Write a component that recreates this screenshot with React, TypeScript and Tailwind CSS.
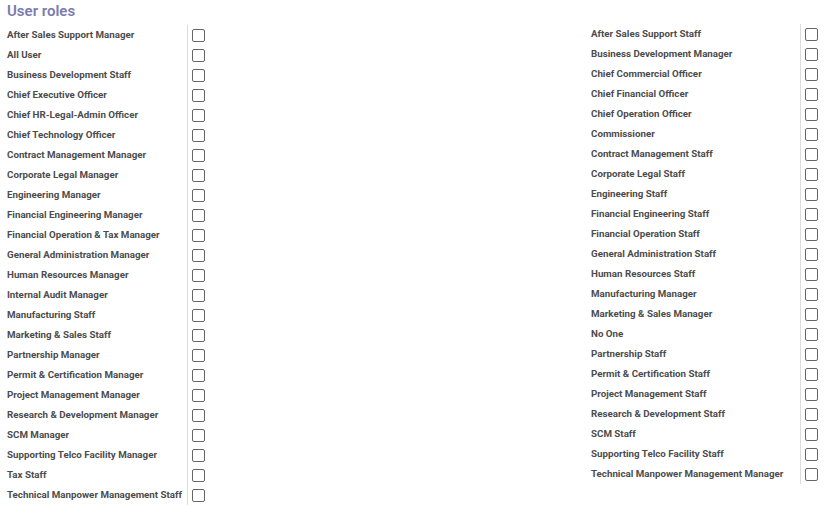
const LEFT = [
  "After Sales Support Manager",
  "All User",
  "Business Development Staff",
  "Chief Executive Officer",
  "Chief HR-Legal-Admin Officer",
  "Chief Technology Officer",
  "Contract Management Manager",
  "Corporate Legal Manager",
  "Engineering Manager",
  "Financial Engineering Manager",
  "Financial Operation & Tax Manager",
  "General Administration Manager",
  "Human Resources Manager",
  "Internal Audit Manager",
  "Manufacturing Staff",
  "Marketing & Sales Staff",
  "Partnership Manager",
  "Permit & Certification Manager",
  "Project Management Manager",
  "Research & Development Manager",
  "SCM Manager",
  "Supporting Telco Facility Manager",
  "Tax Staff",
  "Technical Manpower Management Staff",
];

const RIGHT = [
  "After Sales Support Staff",
  "Business Development Manager",
  "Chief Commercial Officer",
  "Chief Financial Officer",
  "Chief Operation Officer",
  "Commissioner",
  "Contract Management Staff",
  "Corporate Legal Staff",
  "Engineering Staff",
  "Financial Engineering Staff",
  "Financial Operation Staff",
  "General Administration Staff",
  "Human Resources Staff",
  "Manufacturing Manager",
  "Marketing & Sales Manager",
  "No One",
  "Partnership Staff",
  "Permit & Certification Staff",
  "Project Management Staff",
  "Research & Development Staff",
  "SCM Staff",
  "Supporting Telco Facility Staff",
  "Technical Manpower Management Manager",
];

function RoleTable({ roles, labelWidth }: { roles: string[]; labelWidth: string }) {
  return (
    <div className="flex flex-col">
      {roles.map((role) => (
        <div key={role} className="flex h-[20px] items-center">
          <div
            className={`${labelWidth} h-full flex items-center pl-[7px] border-r border-[#dcdcdc] text-[9.75px] font-bold text-[#4c4c4c] whitespace-nowrap`}
          >
            {role}
          </div>
          <div className="pl-[4px] flex items-center">
            <span className="block w-[13px] h-[13px] rounded-[2px] border border-[#666] bg-white" />
          </div>
        </div>
      ))}
    </div>
  );
}

export default function App() {
  return (
    <div
      className="w-[836px] h-[505px] overflow-hidden bg-white"
      style={{ fontFamily: "Roboto, 'Liberation Sans', sans-serif" }}
    >
      <h2 className="pl-[7px] pt-[1px] text-[15px] leading-[20px] font-semibold text-[#7c7bad]">
        User roles
      </h2>
      <div className="flex mt-[4px]">
        <div className="w-[584px]">
          <RoleTable roles={LEFT} labelWidth="w-[188px]" />
        </div>
        <div className="-mt-[1px]">
          <RoleTable roles={RIGHT} labelWidth="w-[217px]" />
        </div>
      </div>
    </div>
  );
}
